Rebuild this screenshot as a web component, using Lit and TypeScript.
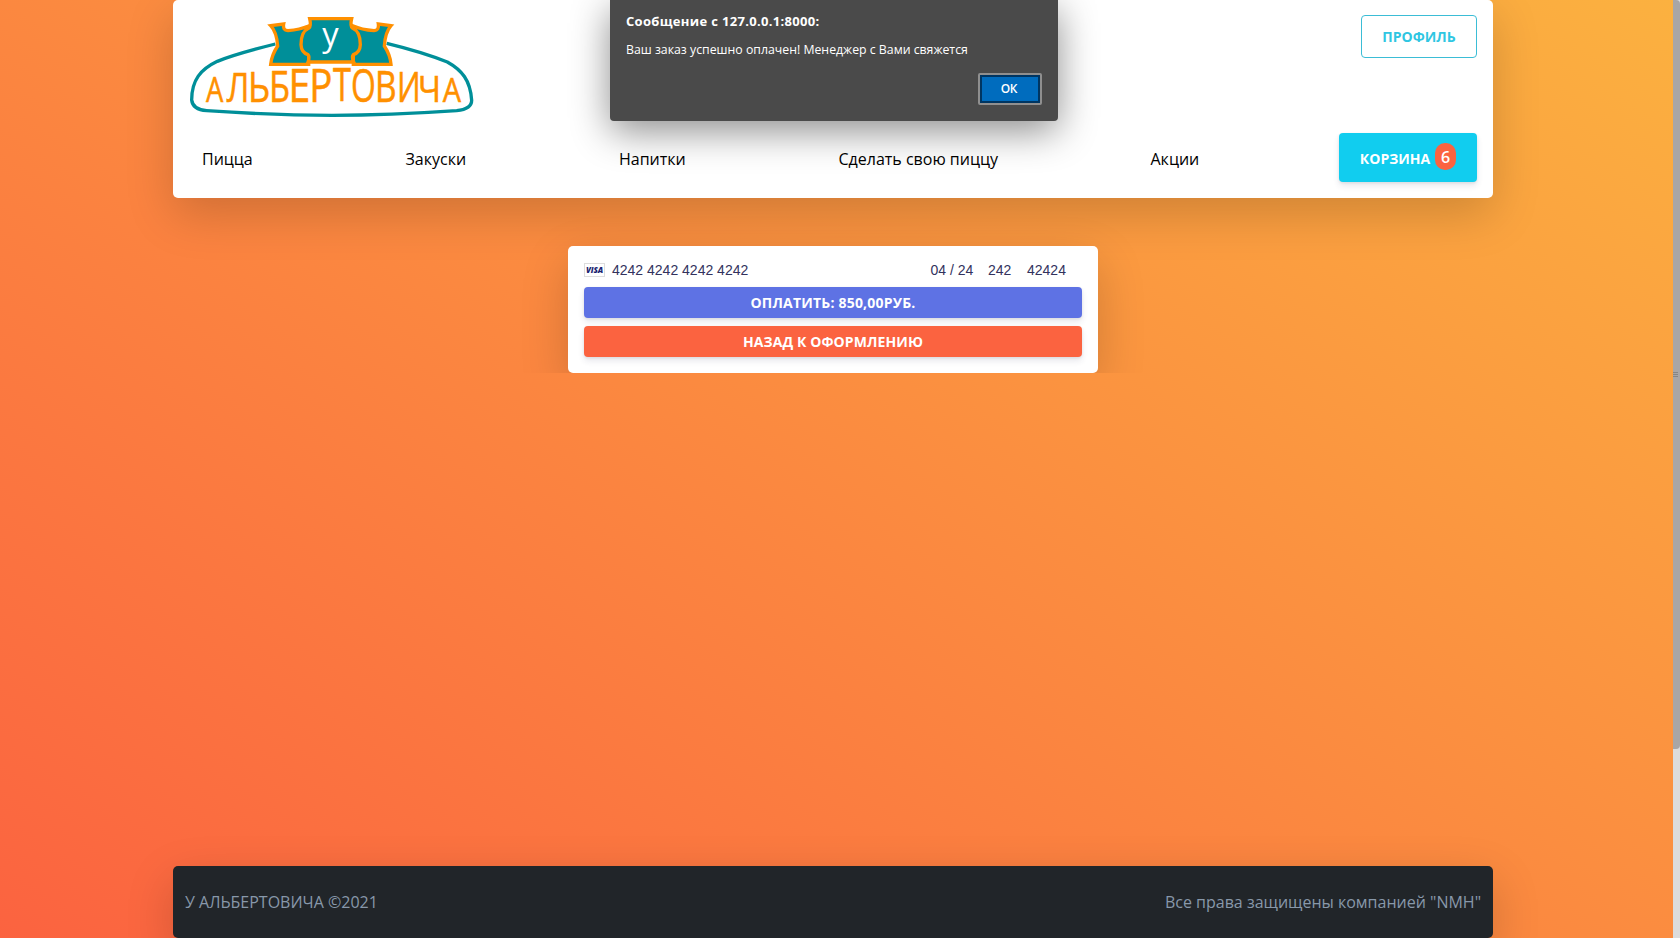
import { LitElement, html, svg, css } from "lit";
import { customElement } from "lit/decorators.js";

// Ink box of each letter (left, right, top, bottom), then advance and side bearings in em.
type Letter = [string, number, number, number, number, number, number, number];
const LETTERS: Letter[] = [
  ["А", 138, 190, 232, 306, 0.633, 0, 0],
  ["Л", 201, 258, 221, 306, 0.69, 0.01, 0.098],
  ["Ь", 275, 325, 217, 306, 0.6, 0.098, 0.05],
  ["Б", 337, 385, 211, 306, 0.61, 0.098, 0.05],
  ["Е", 397, 445, 209, 305, 0.556, 0.098, 0.05],
  ["Р", 459, 512, 207, 306, 0.6, 0.098, 0.045],
  ["Т", 520, 572, 207, 304, 0.553, 0.01, 0.01],
  ["О", 579, 642, 208, 306, 0.78, 0.06, 0.06],
  ["В", 655, 705, 210, 305, 0.647, 0.098, 0.05],
  ["И", 720, 773, 217, 306, 0.77, 0.098, 0.098],
  ["Ч", 782, 833, 228, 306, 0.69, 0.083, 0.098],
  ["А", 848, 903, 234, 306, 0.633, 0, 0],
];

@customElement("pizza-logo")
class PizzaLogo extends LitElement {
  static styles = css`
    :host { display: block; width: 285px; height: 102px; margin-top: 1px; }
    .art { display: block; overflow: visible; }
    .letter { fill: #ff9000; stroke: #ff9000; stroke-width: 1.6; font-family: "Open Sans", "Noto Sans", sans-serif; }
    .initial { fill: #fff; font-family: "Open Sans", "Noto Sans", sans-serif; font-size: 98px; font-weight: 400; }
  `;
  letter([c, x1, x2, y1, y2, adv, l, r]: Letter) {
    const size = (y2 - y1) / 0.714;
    const em = (x2 - x1) / (adv - l - r);
    return svg`<text class="letter" x=${x1 - l * em} y=${y2} font-size=${size} textLength=${adv * em} lengthAdjust="spacingAndGlyphs">${c}</text>`;
  }
  render() {
    return html`<svg class="art" width="285" height="102" viewBox="87 48 855 306">
      <path d="M346 132 C270 151 214 167 172 184 C122 208 95 240 95 300 C97 318 110 330 140 332 C270 341 390 346 516 346 C640 346 760 341 890 332 C922 329 935 316 935 301 C931 240 905 210 862 186 C810 165 750 147 680 130" fill="none" stroke="#008f99" stroke-width="10"/>
      <g fill="#008f99" stroke="#ff9000" stroke-width="10">
        <path d="M332 77 L371 72 Q367 91 384 92 Q420 89 446 78 L446 193 L332 193 Q335 165 353 138 Q350 96 332 77Z"/>
        <path d="M693 77 L655 72 Q658 91 642 92 Q604 89 580 78 L580 193 L693 193 Q691 165 673 138 Q676 96 693 77Z"/>
        <path d="M449 56 L575 56 Q570 78 577 84 Q601 94 601 134 Q600 158 580 164 Q574 171 581 186 L444 186 Q450 171 444 164 Q424 158 423 134 Q423 94 447 84 Q454 78 449 56Z"/>
      </g>
      <text class="initial" x="487" y="139">у</text>
      ${LETTERS.map((l) => this.letter(l))}
    </svg>`;
  }
}

@customElement("app-root")
class AppRoot extends LitElement {
  static styles = css`
    :host { display: flex; position: relative; width: 1680px; height: 938px; overflow: hidden; font-family: "Open Sans", "Noto Sans", sans-serif; font-size: 16px; line-height: 24px; }
    * { box-sizing: border-box; }
    .page { width: 1673px; height: 938px; padding: 0 180px 0 173px; display: flex; flex-direction: column; background: linear-gradient(32deg, #fb6340, #fbb140); overflow: hidden; }
    .bar { width: 7px; background: #dcdcdc; }
    .thumb { height: 749px; border-radius: 0 4px 4px 0; background: #a8a6a6; display: flex; flex-direction: column; justify-content: center; gap: 1px; }
    .grip { width: 5px; height: 1px; background: #858585; }
    .header { height: 198px; flex: none; background: #fff; border-radius: 5px; box-shadow: 0 16px 48px rgba(0,0,0,.175); padding: 15px 16px; display: flex; flex-direction: column; }
    .top { display: flex; justify-content: space-between; height: 118px; }
    .profile { width: 116px; height: 43px; border: 1px solid #3bbdd6; border-radius: 4px; color: #2fc6e2; display: flex; align-items: center; justify-content: center; font-size: 14px; font-weight: 700; }
    .nav { display: flex; align-items: center; height: 49px; padding-left: 13px; color: #000; }
    .link { white-space: nowrap; flex: none; padding-top: 2px; }
    .pizza { width: 203.5px; } .snack { width: 213.5px; } .drink { width: 219.5px; } .own { width: 312px; } .promo { width: 188.5px; }
    .cart { width: 138px; height: 49px; flex: none; background: #11cdef; border-radius: 4px; color: #fff; display: flex; align-items: center; justify-content: center; gap: 5px; padding-top: 2px; font-size: 14px; font-weight: 700; box-shadow: 0 4px 6px rgba(50,50,93,.11), 0 1px 3px rgba(0,0,0,.08); }
    .count { width: 21px; height: 27px; margin-top: -5px; padding-top: 1px; border-radius: 10px; background: #fb6340; display: flex; align-items: center; justify-content: center; font-size: 16px; font-weight: 600; }
    .clip { height: 175px; flex: none; overflow: hidden; margin: 0 -60px; padding: 48px 0 0 455px; }
    .card { width: 530px; height: 127px; background: #fff; border-radius: 5px; box-shadow: 0 16px 48px rgba(0,0,0,.175); padding: 16px; display: flex; flex-direction: column; gap: 8px; }
    .fields { display: flex; align-items: center; height: 17px; color: #32325d; font-family: "Liberation Sans", Arial, sans-serif; font-size: 14px; line-height: 17px; }
    .visa { width: 21px; height: 14px; margin: 0 7px 1px 0; border: 1px solid #ddd; color: #1a1f71; font: italic 800 8px/12px "Open Sans", sans-serif; letter-spacing: -.2px; display: flex; justify-content: center; }
    .number { width: 318.5px; } .date { width: 57.5px; } .cvc { width: 39px; }
    .btn { height: 31px; flex: none; border-radius: 4px; color: #fff; font-size: 14px; font-weight: 700; display: flex; align-items: center; justify-content: center; box-shadow: 0 4px 6px rgba(50,50,93,.11), 0 1px 3px rgba(0,0,0,.08); }
    .pay { background: #5e72e4; letter-spacing: .2px; } .back { background: #fb6340; letter-spacing: .1px; }
    .footer { margin-top: auto; height: 72px; flex: none; background: #212529; border-radius: 5px; box-shadow: 0 16px 48px rgba(0,0,0,.175); color: #8898aa; display: flex; justify-content: space-between; align-items: center; padding: 0 12px; }
    .dialog { position: absolute; left: 610px; top: 0; width: 448px; height: 121px; background: #4a4a4a; color: #fff; border-radius: 0 0 4px 4px; box-shadow: 0 10px 38px rgba(0,0,0,.45); padding: 12px 16px 16px; display: flex; flex-direction: column; font-size: 12.3px; line-height: 18px; }
    .title { font-weight: 700; font-size: 13px; letter-spacing: .32px; } .msg { margin-top: 11px; }
    .ok { align-self: flex-end; margin-top: auto; width: 64px; height: 32px; border: 2px solid #8f8f8f; border-radius: 2px; background: #006cbe; box-shadow: inset 0 0 0 2px #003561; font-size: 12px; font-weight: 600; letter-spacing: -.4px; display: flex; align-items: center; justify-content: center; padding-right: 2px; }
  `;
  render() {
    return html`
      <div class="page">
        <div class="header">
          <div class="top"><pizza-logo></pizza-logo><div class="profile"><span>ПРОФИЛЬ</span></div></div>
          <div class="nav">
            <div class="link pizza"><span>Пицца</span></div><div class="link snack"><span>Закуски</span></div><div class="link drink"><span>Напитки</span></div><div class="link own"><span>Сделать свою пиццу</span></div><div class="link promo"><span>Акции</span></div>
            <div class="cart"><span>КОРЗИНА</span><span class="count">6</span></div>
          </div>
        </div>
        <div class="clip"><div class="card">
          <div class="fields"><div class="visa">VISA</div><div class="number"><span>4242 4242 4242 4242</span></div><div class="date">04 / 24</div><div class="cvc">242</div><div>42424</div></div>
          <div class="btn pay"><span>ОПЛАТИТЬ: 850,00РУБ.</span></div>
          <div class="btn back"><span>НАЗАД К ОФОРМЛЕНИЮ</span></div>
        </div></div>
        <div class="footer"><span>У АЛЬБЕРТОВИЧА ©2021</span><span>Все права защищены компанией "NMH"</span></div>
      </div>
      <div class="bar"><div class="thumb"><div class="grip"></div><div class="grip"></div><div class="grip"></div></div></div>
      <div class="dialog"><div class="title"><span>Сообщение с 127.0.0.1:8000:</span></div><div class="msg"><span>Ваш заказ успешно оплачен! Менеджер с Вами свяжется</span></div><div class="ok">ОК</div></div>`;
  }
}
